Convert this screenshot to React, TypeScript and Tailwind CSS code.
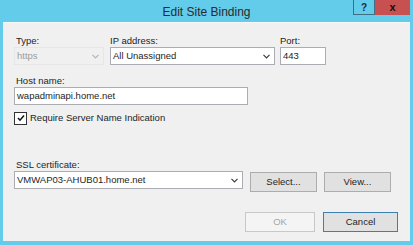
import React from "react";

const font = { fontFamily: '"Liberation Sans", Arial, sans-serif' };

function Chevron({ disabled }: { disabled?: boolean }) {
  return (
    <svg width="7" height="5" viewBox="0 0 7 5" className="shrink-0">
      <path d="M0.5 0.8 L3.5 3.8 L6.5 0.8" fill="none" stroke={disabled ? "#b4b4b4" : "#3c3c3c"} strokeWidth="1.2" />
    </svg>
  );
}

function Button({ label, w, disabled, primary }: { label: string; w: string; disabled?: boolean; primary?: boolean }) {
  const base = "h-[20px] flex items-center justify-center border text-[9.5px] ";
  const cls = disabled
    ? "bg-[#f4f4f4] border-[#c8c8c8] text-[#a6a6a6]"
    : primary
    ? "bg-[#e1e1e1] border-[#3c7fb1] text-[#1e1e1e]"
    : "bg-[#e1e1e1] border-[#adadad] text-[#1e1e1e]";
  return <div className={base + cls + " " + w}>{label}</div>;
}

export default function App() {
  return (
    <div className="w-[413px] h-[245px] bg-[#62ccea] flex flex-col overflow-hidden" style={font}>
      <div className="relative h-[22px] shrink-0 flex items-center justify-center">
        <span className="text-[12px] text-[#2a2a2a] leading-none mt-[1px]">Edit Site Binding</span>
        <div className="absolute right-[3px] top-0 flex">
          <div className="w-[22px] h-[15px] bg-[#62ccea] border border-t-0 border-[#3f6f82] flex items-center justify-center text-[10px] font-bold text-[#1c2a3a]">?</div>
          <div className="w-[35px] h-[15px] bg-[#c75050] flex items-center justify-center text-[11px] font-bold text-[#111] leading-none">x</div>
        </div>
      </div>
      <div className="mx-[3px] mb-[4px] flex-1 bg-[#f0f0f0] border-t border-[#f7f7f7] flex flex-col pl-[11px] pr-[12px] text-[9.5px] text-[#1e1e1e]">
        <div className="flex mt-[11px]">
          <div className="w-[90px] flex flex-col">
            <div className="h-[13px] leading-[13px] pl-[2px]">Type:</div>
            <div className="h-[18px] flex items-center justify-between pl-[2px] pr-[4px] text-[#9d9d9d] border border-[#e6e6e6]">
              <span>https</span>
              <Chevron disabled />
            </div>
          </div>
          <div className="w-[165px] ml-[6px] flex flex-col">
            <div className="h-[13px] leading-[13px]">IP address:</div>
            <div className="h-[18px] flex items-center justify-between pl-[2px] pr-[4px] bg-white border border-[#abadb3]">
              <span>All Unassigned</span>
              <Chevron />
            </div>
          </div>
          <div className="w-[46px] ml-[5px] flex flex-col">
            <div className="h-[13px] leading-[13px]">Port:</div>
            <div className="h-[18px] flex items-center pl-[2px] bg-white border border-[#abadb3]">443</div>
          </div>
        </div>
        <div className="mt-[9px] h-[13px] leading-[13px] pl-[2px]">Host name:</div>
        <div className="w-[234px] h-[18px] flex items-center pl-[2px] bg-white border border-[#abadb3]">wapadminapi.home.net</div>
        <div className="mt-[6px] flex items-center">
          <div className="w-[13px] h-[13px] bg-white border border-[#333] flex items-center justify-center">
            <svg width="8" height="8" viewBox="0 0 8 8">
              <path d="M1 4 L3 6.2 L7 1.5" fill="none" stroke="#111" strokeWidth="1.5" />
            </svg>
          </div>
          <span className="ml-[3px]">Require Server Name Indication</span>
        </div>
        <div className="mt-[33px] h-[13px] leading-[13px] pl-[2px]">SSL certificate:</div>
        <div className="flex items-start">
          <div className="w-[229px] h-[18px] flex items-center justify-between pl-[2px] pr-[4px] bg-white border border-[#abadb3]">
            <span>VMWAP03-AHUB01.home.net</span>
            <Chevron />
          </div>
          <div className="ml-[7px] mt-[1px]"><Button label="Select..." w="w-[67px]" /></div>
          <div className="ml-[7px] mt-[1px]"><Button label="View..." w="w-[67px]" /></div>
        </div>
        <div className="mt-[20px] flex justify-end">
          <Button label="OK" w="w-[70px]" disabled />
          <div className="ml-[8px]"><Button label="Cancel" w="w-[75px]" primary /></div>
        </div>
      </div>
    </div>
  );
}
